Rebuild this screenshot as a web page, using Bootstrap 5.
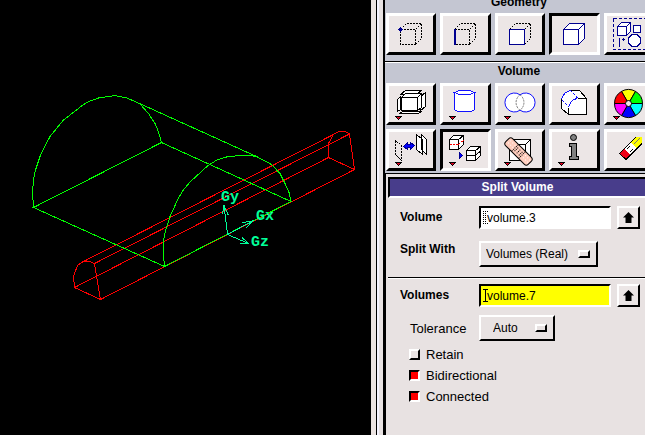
<!DOCTYPE html>
<html lang="en">
<head>
<meta charset="utf-8">
<meta name="viewport" content="width=device-width, initial-scale=1">
<title>Split Volume</title>
<link href="https://cdn.jsdelivr.net/npm/bootstrap@5.3.0/dist/css/bootstrap.min.css" rel="stylesheet">
<style>
  body { background: #000; color: #000; font: 12px/17px "Liberation Sans", Arial, sans-serif; }
  .view3d { min-width: 0; }
  .view3d svg { width: 100%; height: 100%; }
  .view3d text { font: bold 15px "Liberation Mono", monospace; fill: #00ff99; }
  .side { flex: 0 0 274px; }
  .sash { width: 5px; background: #ece4e2; border-right: 1px solid #000; box-sizing: content-box; }
  .rail { width: 8px; background: #e8e2e2; border-left: 2px solid #f6f4ff; border-right: 2px solid #000; }
  .tools { background: #c4c6d2; }
  .group-title { font-weight: 700; line-height: 17px; padding-bottom: 3px; }
  .group-title.clipped { margin-top: -6px; padding-bottom: 2px; }
  .tool-row { display: grid; grid-template-columns: repeat(5, 1fr); gap: 4px; margin: 0 -9px 0 1px; }
  .rule { height: 2px; border-top: 1px solid #000; background: #fff; }
  .group-rule { margin-top: 6px; }
  .tool, .pick { padding: 0; background: #ece6e6; border: 3px solid; border-color: #fff #000 #000 #fff; }
  .tool { height: 42px; overflow: hidden; }
  .tool.pressed { border-color: #000 #fff #fff #000; }
  .tool svg { display: block; width: 44px; height: 36px; fill: none; stroke: #000; shape-rendering: crispEdges; }
  .tool .round { shape-rendering: auto; }
  .form-pane { background: #e8e2e2; border-left: 1px solid #000; border-top: 1px solid #000; padding: 3px 0 0 2px; margin-top: 2px; }
  .pane-title { background: #483d8b; color: #fff; font-size: 12px; font-weight: 700; border: solid; border-width: 2px 0 2px 2px; border-color: #000 #000 #fff #000; line-height: 17px; }
  .entry { padding-left: 12px; }
  .entry-label { width: 79px; font-weight: 700; }
  .entry-label.indent { padding-left: 10px; font-size: 13px; font-weight: 400; }
  .gap-s { margin-top: 8px; }
  .gap-m { margin-top: 12px; }
  .gap-t { margin-top: 5px; }
  .entry-rule { margin-top: 10px; }
  .field { height: 23px; width: 132px; border: 2px solid; border-color: #000 #fff #fff #000; border-radius: 0; padding: 0 0 0 6px; font-size: 12px; background: #fff; color: #000; }
  .field.active { background: #ff0; }
  .caret { left: 4px; top: 5px; width: 5px; height: 13px; fill: none; stroke: #000; pointer-events: none; shape-rendering: crispEdges; }
  .pick { width: 23px; height: 23px; border-width: 2px; margin-left: 6px; }
  .pick svg { display: block; margin: auto; width: 13px; height: 13px; }
  .option { appearance: none; height: 26px; border: 2px solid; border-color: #fff #000 #000 #fff; border-radius: 0; background: #e8e2e2; color: #000; font-size: 12px; padding: 0 0 0 5px; }
  .option.wide { width: 119px; }
  .option.auto { width: 76px; padding-left: 12px; }
  .knob { right: 8px; top: 9px; width: 12px; height: 8px; border: 2px solid; border-color: #fff #000 #000 #fff; pointer-events: none; }
  .tick { appearance: none; width: 11px; height: 11px; margin: 0; border: 2px solid; border-color: #fff #000 #000 #fff; background: #e8e2e2; }
  .tick:checked { background: #f00; border-color: #000 #fff #fff #000; }
  .checks { padding: 3px 0 0 21px; font-size: 13px; }
  .check-line { height: 21px; gap: 6px; }
</style>
<script src="https://cdn.jsdelivr.net/npm/bootstrap@5.3.0/dist/js/bootstrap.bundle.min.js"></script>
</head>
<body class="overflow-hidden">
<div class="d-flex vh-100">
  <main class="view3d flex-grow-1">
    <svg viewBox="0 0 371 435" preserveAspectRatio="xMinYMin meet" fill="none" shape-rendering="crispEdges" role="img" aria-label="3D model view">
      <g stroke="#f00">
        <path d="M74.500 287.500L73.500 276.500L77.500 265.500L82.500 262L90 261.500L94.500 263.500L100.500 299.500Z"/>
        <path d="M328.500 157.500V143.500L333.500 134.500L338.500 131.500H345.500L349.500 134L354.500 169.500Z"/>
        <path d="M82.500 262L333.500 134.500M94.500 263.500L349.500 134M74.500 287.500L328.500 157.500M100.500 299.500L354.500 169.500"/>
      </g>
      <g stroke="#0f0">
        <path d="M33.500 207.500L32.500 192.500L33.500 180L35.500 170L40.500 155L50 136.500L63 120.500L83.500 104.500L90 101L98.500 98L115 95.500L127 98L139.500 103.500L148.500 113.500L155 123.500L158.500 132L161.500 142.500"/>
        <path d="M164.500 266.500L163.500 255V240L165.500 231L170 216.500L177.500 200L182.500 191L190 182L208 165.500L217 160L226.500 157L240 155.500H250L256.500 156.500L271.500 164.500L280 173.500L285 183.500L289 192.500L291 201.500"/>
        <path d="M33.500 207.500L161.500 142.500L291 201.500L164.500 266.500ZM139.500 103.500L256.500 156.500"/>
      </g>
      <path stroke="#00ff99" d="M227.500 234.500L224 205.500M222.500 214.500L224 205.500L228.500 215.500M227.500 234.500L252.500 221M242.500 222.500L252.500 221L245.500 228.500M227.500 234.500L248.500 243.500M242 237.500L248.500 243.500H240"/>
      <text x="221" y="201">Gy</text>
      <text x="256" y="220">Gx</text>
      <text x="251" y="246">Gz</text>
    </svg>
  </main>

  <aside class="side d-flex overflow-hidden">
    <div class="sash flex-shrink-0"></div>
    <div class="rail flex-shrink-0"></div>
    <div class="tools flex-grow-1 d-flex flex-column">
      <div class="group-title clipped text-center ps-2">Geometry</div>
      <div class="tool-row">
        <button class="tool" type="button" aria-label="Vertex"><svg viewBox="0 0 44 36"><path stroke-dasharray="2 1" d="M11.500 13.500H26.500V28.500H11.500ZM11.500 13.500L17.500 7.500H32.500V22.500L26.500 28.500M26.500 13.500L32.500 7.500"/><path fill="#000090" stroke="none" d="M9 13h1v-1h1v-1h1v1h1v1h1v1h-1v1h-1v1h-1v-1h-1v-1H9z"/></svg></button>
        <button class="tool" type="button" aria-label="Edge"><svg viewBox="0 0 44 36"><path stroke-dasharray="2 1" d="M11.500 13.500H26.500V28.500H11.500M11.500 13.500L17.500 7.500H32.500V22.500L26.500 28.500M26.500 13.500L32.500 7.500"/><path stroke="#000090" stroke-width="2" d="M12 13V29"/></svg></button>
        <button class="tool" type="button" aria-label="Face"><svg viewBox="0 0 44 36"><path stroke-dasharray="2 1" d="M11.500 13.500L17.500 7.500H32.500V22.500L26.500 28.500M26.500 13.500L32.500 7.500"/><path stroke="#000090" fill="#fff" d="M11.500 13.500H26.500V28.500H11.500Z"/></svg></button>
        <button class="tool pressed" type="button" aria-label="Volume"><svg viewBox="0 0 44 36"><path stroke="#000090" fill="#fff" d="M11.500 13.500L17.500 7.500H32.500V22.500L26.500 28.500H11.500ZM11.500 13.500H26.500V28.500M26.500 13.500L32.500 7.500"/></svg></button>
        <button class="tool" type="button" aria-label="Group"><svg viewBox="0 0 44 36"><g stroke="#000090"><path stroke-dasharray="3 2" d="M6.500 2.500H39.500V33.500H6.500Z"/><path fill="#fff" d="M10.500 10.500L14.500 6.500H23.500V15.500L19.500 19.500H10.500ZM10.500 10.500H19.500V19.500M19.500 10.500L23.500 6.500M26.500 9.500H33.500V16.500H26.500Z"/><path fill="#fff" d="M25 18.500H30L33.500 22V27L30 30.500H25L21.500 27V22Z"/><path d="M12.500 22V31M15 23.500H18M16.500 22V25"/></g></svg></button>
      </div>
      <div class="rule group-rule"></div>
      <div class="group-title text-center ps-2">Volume</div>
      <div class="tool-row">
        <button class="tool" type="button" aria-label="Create volume"><svg viewBox="0 0 44 36"><g fill="#fff"><path d="M16.500 4.500H32.500L27.500 8.500H11.500ZM8.500 13.500L11.500 10.500V23.500L8.500 25.500ZM31.500 10.500L36.500 6.500V20.500L31.500 24.500ZM10.500 27.500L13.500 25.500H32.500L29.500 27.500Z"/><path d="M12.500 11.500L16.500 7.500H32.500V21.500L28.500 24.500H12.500Z"/><path d="M12.500 11.500H28.500V24.500H12.500ZM28.500 11.500L32.500 7.500"/></g><path fill="#e00020" d="M6.500 30.500H12.500L9.500 33.500Z"/></svg></button>
        <button class="tool" type="button" aria-label="Cylinder"><svg viewBox="0 0 44 36"><g stroke="#1010ff" fill="#fff"><path d="M11.500 6.500V23.500L14.500 25.500H28.500L31.500 23.500V6.500"/><path d="M11.500 6.500L16.500 4.500H26.500L31.500 6.500L26.500 8.500H16.500Z"/></g><path fill="#e00020" d="M6.500 30.500H12.500L9.500 33.500Z"/></svg></button>
        <button class="tool" type="button" aria-label="Boolean"><svg viewBox="0 0 44 36"><g class="round"><circle cx="16.500" cy="16.500" r="9.500" fill="#fff" stroke="none"/><circle cx="27.500" cy="16.500" r="9.500" fill="#fff" stroke="none"/><path stroke="#1010ff" d="M22 8.800A9.500 9.500 0 1 0 22 24.200A9.500 9.500 0 1 0 22 8.800"/><path stroke="#777" stroke-dasharray="2 1" d="M22 8.800A9.500 9.500 0 0 1 22 24.200A9.500 9.500 0 0 1 22 8.800"/></g><path fill="#e00020" d="M6.500 30.500H12.500L9.500 33.500Z"/></svg></button>
        <button class="tool" type="button" aria-label="Blend"><svg viewBox="0 0 44 36"><path fill="#fff" stroke="none" d="M9.500 22.500V12.500L12.500 7.500L17.500 4.500H27.500L34.500 12.500V28.500H16.500Z"/><path d="M9.500 12.500V22.500L16.500 28.500H34.500V12.500L27.500 4.500H18.500M16.500 28.500V21.500M25.500 12.500H34.500"/><g stroke="#1010ff"><path d="M9.500 13.500L10.500 10.500L13.500 6.500L18.500 4.500"/><path d="M16.500 21.500L18.500 16.500L21.500 13.500L25.500 12.500"/><path stroke-dasharray="2 2" d="M18.500 4.500L26 12.500M10.500 14.500L16.500 20.500"/></g></svg></button>
        <button class="tool" type="button" aria-label="Color"><svg viewBox="0 0 44 36"><g class="round"><path fill="#ff0" d="M21.500 17.500L14.500 5.400A14 14 0 0 1 28.500 5.400Z"/><path fill="#0f0" d="M21.500 17.500L28.500 5.400A14 14 0 0 1 35.500 17.500Z"/><path fill="#0ff" d="M21.500 17.500H35.500A14 14 0 0 1 28.500 29.600Z"/><path fill="#00f" d="M21.500 17.500L28.500 29.600A14 14 0 0 1 14.500 29.600Z"/><path fill="#f0f" d="M21.500 17.500L14.500 29.600A14 14 0 0 1 7.500 17.500Z"/><path fill="#f00" d="M21.500 17.500H7.500A14 14 0 0 1 14.500 5.400Z"/><circle cx="21.500" cy="17.500" r="3" fill="#ece6e6"/></g><path fill="#e00020" d="M6.500 30.500H12.500L9.500 33.500Z"/></svg></button>
        <button class="tool" type="button" aria-label="Move"><svg viewBox="0 0 44 36"><path stroke-dasharray="2 1" d="M6.500 8.500V22.500L12.500 28.500V13.500Z"/><path fill="#fff" d="M32.500 2.500V17.500L37.500 22.500V7.500ZM27.500 2.500V17.500L33.500 22.500V7.500Z"/><path fill="#00f" stroke="#000090" d="M14.500 14.500L18.500 10.500V12.500H21.500V10.500L25.500 13.500L21.500 17.500V15.500H18.500V17.500Z"/><path fill="#e00020" d="M6.500 30.500H12.500L9.500 33.500Z"/></svg></button>
        <button class="tool pressed" type="button" aria-label="Split"><svg viewBox="0 0 44 36"><path fill="#fff" d="M6.500 7.500L10.500 3.500H20.500V12.500L15.500 17.500H6.500ZM6.500 7.500H15.500V17.500M15.500 7.500L20.500 3.500"/><path stroke="#f00" stroke-dasharray="2 1" d="M6.500 12.500H15.500L20.500 8"/><path fill="#fff" d="M23.500 18.500L27.500 14.500H37.500V23.500L32.500 28.500H23.500ZM23.500 18.500H32.500V28.500M32.500 18.500L37.500 14.500M23.500 23.500H32.500L37.500 19"/><path fill="#00f" stroke="#000090" d="M16.500 20.500V26.500L19.500 23.500Z"/><path fill="#e00020" d="M6.500 30.500H12.500L9.500 33.500Z"/></svg></button>
        <button class="tool" type="button" aria-label="Heal"><svg viewBox="0 0 44 36"><path fill="#fff" d="M11.500 7.500H32.500V28.500H11.500Z"/><path fill="#fff" d="M17.500 12.500H27.500V23.500H17.500ZM32.500 7.500L27.500 12.500"/><g class="round" transform="rotate(45 20.500 19.500)"><rect x="4.500" y="14.500" width="32" height="10" rx="3" fill="#ffcdbd"/><path stroke-dasharray="1 1" d="M15.500 15V24M25.500 15V24"/><path stroke-dasharray="1 2" d="M17 17.500H25M17 19.500H25M17 21.500H25"/><path stroke="#fff" stroke-dasharray="1 2" d="M7 17.500H14M7 20.500H14M28 17.500H35M28 20.500H35"/></g><path fill="#e00020" d="M6.500 30.500H12.500L9.500 33.500Z"/></svg></button>
        <button class="tool" type="button" aria-label="Summarize"><svg viewBox="0 0 44 36"><circle class="round" cx="21.500" cy="5.500" r="3" fill="#808080"/><path fill="#808080" d="M17.500 11.500H24.500V24.500H26.500V27.500H17.500V24.500H19.500V14.500H17.500Z"/><path fill="#e00020" d="M6.500 30.500H12.500L9.500 33.500Z"/></svg></button>
        <button class="tool" type="button" aria-label="Delete"><svg viewBox="0 0 44 36"><path fill="#ff0" stroke="none" d="M23 10.500L28.500 5H35V11.500L29.500 17Z"/><path fill="#fff" stroke="none" d="M17 16.500L23.500 10L29.500 16.500L23.500 22.500Z"/><path fill="#f00018" stroke="none" d="M12.500 21.500L17 16.500L23.500 22.500L19 27.500Z"/><path d="M28.500 5.500L12.500 21.500L19 27.500L35 11.500"/><path stroke-dasharray="3 1" d="M19.500 17.500L23 14M22.500 20.500L26 17"/><path stroke="#777" d="M26.500 12.500L33 6"/></svg></button>
      </div>

      <form class="form-pane flex-grow-1" aria-label="Split Volume" onsubmit="return false">
        <h1 class="pane-title text-center m-0">Split Volume</h1>
        <div class="entry d-flex align-items-center gap-s">
          <label class="entry-label" for="volume">Volume</label>
          <div class="position-relative">
            <input class="field d-block" id="volume" type="text" value="volume.3">
            <svg class="caret position-absolute" viewBox="0 0 5 13"><path stroke-dasharray="1 1" d="M0 .5H5M2.500 0V13M0 12.500H5M.5 0V13"/></svg>
          </div>
          <button class="pick" type="button" aria-label="Pick volume"><svg viewBox="0 0 13 13"><path d="M6.500 1L12 6.500H9.500V12H3.500V6.500H1Z"/></svg></button>
        </div>
        <div class="entry d-flex align-items-start gap-m">
          <label class="entry-label" for="split-with">Split With</label>
          <div class="position-relative">
            <select class="option wide d-block" id="split-with"><option>Volumes (Real)</option></select>
            <span class="knob position-absolute"></span>
          </div>
        </div>
        <div class="rule entry-rule"></div>
        <div class="entry d-flex align-items-center gap-t">
          <label class="entry-label" for="volumes">Volumes</label>
          <div class="position-relative">
            <input class="field active d-block" id="volumes" type="text" value="volume.7">
            <svg class="caret position-absolute" viewBox="0 0 5 13"><path d="M0 .5H5M2.500 0V13M0 12.500H5"/></svg>
          </div>
          <button class="pick" type="button" aria-label="Pick volumes"><svg viewBox="0 0 13 13"><path d="M6.500 1L12 6.500H9.500V12H3.500V6.500H1Z"/></svg></button>
        </div>
        <div class="entry d-flex align-items-center gap-s">
          <label class="entry-label indent" for="tolerance">Tolerance</label>
          <div class="position-relative">
            <select class="option auto d-block" id="tolerance"><option>Auto</option></select>
            <span class="knob position-absolute"></span>
          </div>
        </div>
        <div class="checks">
          <div class="check-line d-flex align-items-center"><input class="tick" type="checkbox" id="retain"><label for="retain">Retain</label></div>
          <div class="check-line d-flex align-items-center"><input class="tick" type="checkbox" id="bidirectional" checked><label for="bidirectional">Bidirectional</label></div>
          <div class="check-line d-flex align-items-center"><input class="tick" type="checkbox" id="connected" checked><label for="connected">Connected</label></div>
        </div>
      </form>
    </div>
  </aside>
</div>
</body>
</html>
